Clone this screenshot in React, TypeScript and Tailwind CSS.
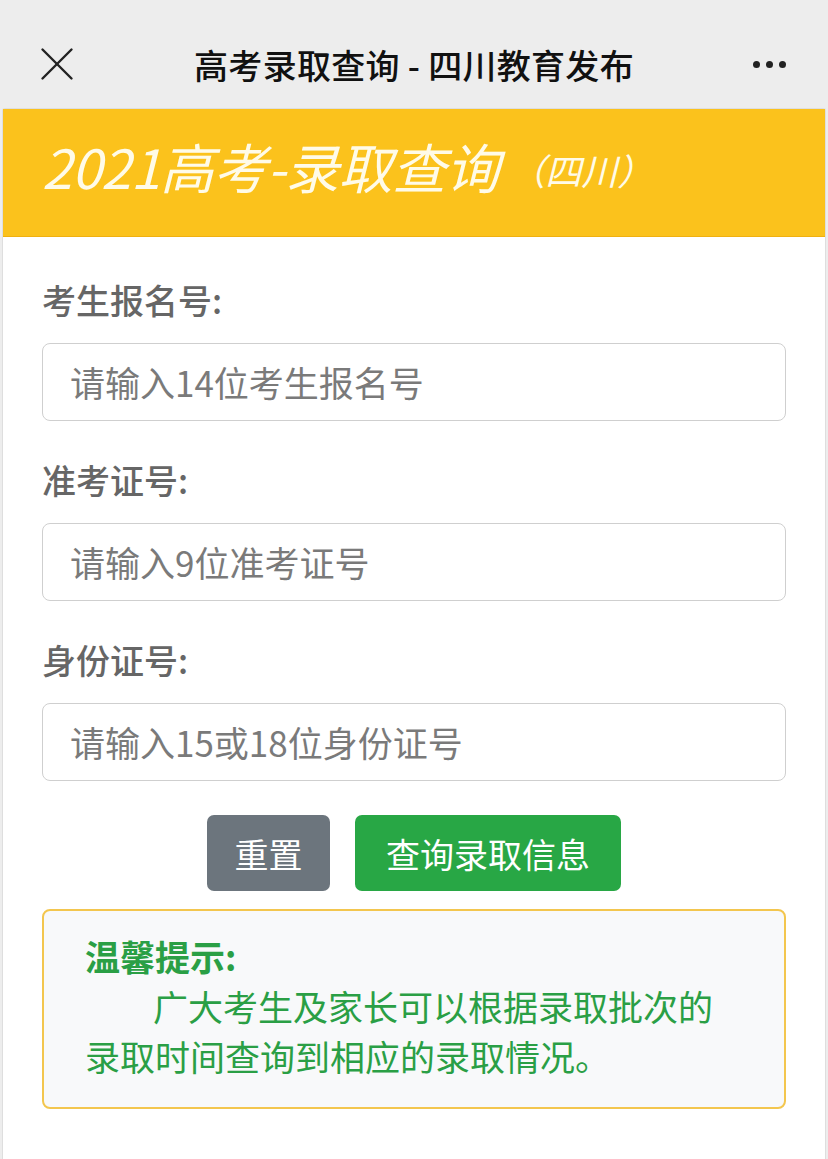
import { X } from 'lucide-react'

const font = { fontFamily: '"Noto Sans CJK SC", "Noto Sans", sans-serif' }

const fields = [
  { label: '考生报名号:', placeholder: '请输入14位考生报名号' },
  { label: '准考证号:', placeholder: '请输入9位准考证号' },
  { label: '身份证号:', placeholder: '请输入15或18位身份证号' },
]

export default function App() {
  return (
    <div className="min-h-[1159px] bg-[#ededed] font-['Noto_Sans_CJK_SC',sans-serif]">
      {/* wechat top bar */}
      <header className="h-[108px] flex items-center justify-between pl-[28px] pr-[40px] pt-[20px] relative">
        <X className="w-[58px] h-[58px] text-[#222]" strokeWidth={1} />
        <h1 className="absolute left-0 right-0 text-center text-[34px] text-[#111] font-medium pointer-events-none tracking-[0.3px]">
          高考录取查询 - 四川教育发布
        </h1>
        <div className="flex items-center gap-[6px] pr-[2px]">
          <span className="w-[7px] h-[7px] rounded-full bg-[#222]" />
          <span className="w-[7px] h-[7px] rounded-full bg-[#222]" />
          <span className="w-[7px] h-[7px] rounded-full bg-[#222]" />
        </div>
      </header>

      <div className="mx-[2px] bg-white border border-[#dedede] border-b-0 rounded-t-[3px] min-h-[1051px]">
        <div className="h-[128px] bg-[#fbc21c] border-b border-[#f0b010] flex items-center px-[39px] pb-[14px]">
          <span className="italic text-[54px] text-[#fffbe8] leading-none tracking-[-0.5px]" style={font}>
            2021高考-录取查询
          </span>
          <span className="italic text-[36px] text-[#fffbe8] leading-none ml-[10px] mt-[6px]" style={font}>
            （四川）
          </span>
        </div>

        <div className="px-[39px] pt-[38px]">
          {fields.map(f => (
            <div key={f.label} className="mb-[34px]">
              <div className="h-[48px] flex items-center text-[34px] text-[#666] font-medium mb-[20px]">
                {f.label}
              </div>
              <div className="h-[78px] border border-[#cfcfcf] rounded-[8px] flex items-center px-[27px] text-[35px] text-[#7a7a7a]">
                {f.placeholder}
              </div>
            </div>
          ))}

          <div className="flex justify-center gap-[25px]">
            <button className="h-[76px] w-[123px] rounded-[7px] bg-[#6c757d] text-white text-[34px]">
              重置
            </button>
            <button className="h-[76px] w-[266px] rounded-[7px] bg-[#28a745] text-white text-[34px]">
              查询录取信息
            </button>
          </div>

          <div className="mt-[18px] h-[200px] border-2 border-[#f3c64e] rounded-[8px] bg-[#f8f9fa] px-[41px] pt-[20px] text-[35px] leading-[50px] text-[#2a9f45]">
            <div className="font-bold">温馨提示:</div>
            <div className="pl-[68px]">广大考生及家长可以根据录取批次的</div>
            <div>录取时间查询到相应的录取情况。</div>
          </div>
        </div>
      </div>
    </div>
  )
}
